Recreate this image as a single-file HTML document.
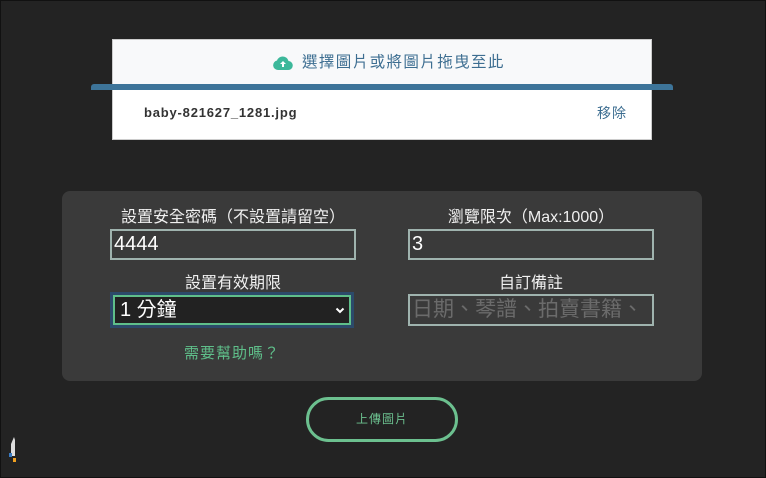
<!DOCTYPE html>
<html><head><meta charset="utf-8"><style>
*{box-sizing:border-box;margin:0;padding:0}
body{width:766px;height:478px;background:#232323;position:relative;overflow:hidden;font-family:"Liberation Sans","Noto Sans CJK TC",sans-serif;box-shadow:inset 0 0 0 1px #111}
.a{position:absolute}
.lbl{position:absolute;color:#f0f0f0;font-size:16px;text-align:center;line-height:18px;white-space:nowrap}
.inp{position:absolute;border:2px solid #9fb3ae;background:#3a3a3a;color:#fff;font-size:20px;line-height:26px;padding-left:2px}
</style></head><body>
<div class="a" style="left:112px;top:39px;width:540px;height:101px;background:#fff;border:1px solid #ccc"></div>
<div class="a" style="left:113px;top:40px;width:538px;height:46px;background:#f8f9fa"></div>
<div class="a" style="left:91px;top:84px;width:582px;height:6px;background:#3d7499;border-radius:3px 3px 0 0"></div>
<svg class="a" style="left:273px;top:55px" width="20" height="16" viewBox="0 0 20 16"><path d="M5 15h10a4.5 4.5 0 0 0 .5-9A6 6 0 0 0 4 5.5 4.8 4.8 0 0 0 5 15z" fill="#3cb89a"/><path d="M10 6l-3 3h2v3h2V9h2z" fill="#fff"/></svg>
<div class="a" style="left:302px;top:53px;color:#3d6e91;font-size:15.5px;letter-spacing:1.4px;line-height:20px">選擇圖片或將圖片拖曳至此</div>
<div class="a" style="left:144px;top:105px;color:#333;font-size:13px;letter-spacing:.8px;font-weight:bold;line-height:16px">baby-821627_1281.jpg</div>
<div class="a" style="left:597px;top:104px;color:#3d6e91;font-size:14px;letter-spacing:1px;line-height:18px">移除</div>

<div class="a" style="left:62px;top:191px;width:640px;height:190px;background:#3a3a3a;border-radius:8px"></div>
<div class="lbl" style="left:110px;top:209px;width:246px">設置安全密碼（不設置請留空）</div>
<div class="inp" style="left:110px;top:229px;width:246px;height:31px">4444</div>
<div class="lbl" style="left:408px;top:209px;width:246px">瀏覽限次（Max:1000）</div>
<div class="inp" style="left:408px;top:229px;width:246px;height:31px">3</div>
<div class="lbl" style="left:110px;top:275px;width:246px">設置有效期限</div>
<div class="a" style="left:110px;top:292px;width:244px;height:36px;border:3px solid #2c4a6a"></div>
<div class="a" style="left:113px;top:295px;width:238px;height:30px;border:2px solid #5fbf8a;background:#222;color:#fff;font-size:20px;line-height:26px;padding-left:5px">1 分鐘</div>
<svg class="a" style="left:335px;top:307px" width="10" height="7" viewBox="0 0 10 7"><path d="M1.5 1.5l3.5 3.5 3.5-3.5" stroke="#fff" stroke-width="2" fill="none"/></svg>
<div class="lbl" style="left:408px;top:275px;width:246px">自訂備註</div>
<div class="inp" style="left:408px;top:294px;width:246px;height:32px;color:#6b6b6b;font-size:21px;overflow:hidden;white-space:nowrap;line-height:27px">日期、琴譜、拍賣書籍、</div>
<div class="a" style="left:110px;top:342px;width:244px;text-align:center;color:#5fbf8a;font-size:15px;letter-spacing:1px">需要幫助嗎？</div>

<div class="a" style="left:306px;top:397px;width:152px;height:45px;border:3px solid #6cc08f;border-radius:23px;color:#6cc08f;font-size:12px;letter-spacing:1px;text-align:center;line-height:39px">上傳圖片</div>
<svg class="a" style="left:8px;top:436px" width="10" height="30" viewBox="0 0 10 30"><path d="M6 1L7 4V20H3V8z" fill="#ddd"/><rect x="1" y="17" width="3" height="4" fill="#3a7ac0"/><rect x="5" y="22" width="3" height="4" fill="#f0a020"/></svg>
</body></html>
